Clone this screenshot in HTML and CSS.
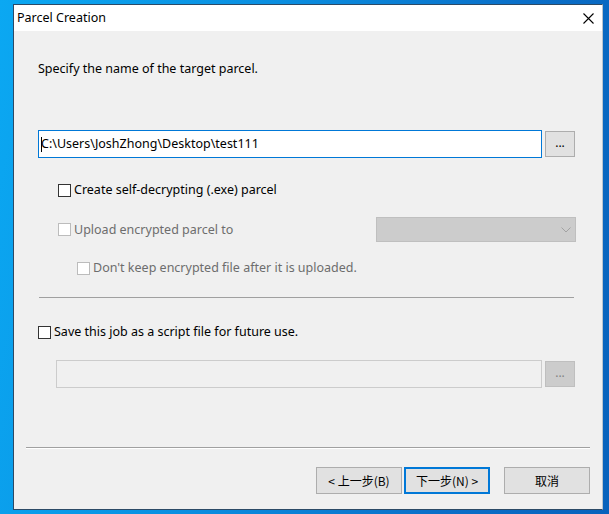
FILE: index.html
```html
<!DOCTYPE html>
<html>
<head>
<meta charset="utf-8">
<link rel="stylesheet" href="styles.css">
</head>
<body>
<div class="desktop">
  <div class="window">
    <div class="titlebar">
      <span class="title">Parcel Creation</span>
      <svg class="close" width="11" height="11" viewBox="0 0 11 11"><path d="M0.5 0.5 L10.5 10.5 M10.5 0.5 L0.5 10.5" stroke="#000" stroke-width="1.1" fill="none"/></svg>
    </div>
    <div class="client">
      <p class="prompt">Specify the name of the target parcel.</p>
      <div class="path-row">
        <div class="textbox focused"><span class="caret"></span>C:\Users\JoshZhong\Desktop\test111</div>
        <div class="browse">...</div>
      </div>
      <div class="check row-exe"><span class="box"></span>Create self-decrypting (.exe) parcel</div>
      <div class="upload-row">
        <div class="check disabled"><span class="box"></span>Upload encrypted parcel to</div>
        <div class="combo"><svg class="chev" width="10" height="6" viewBox="0 0 10 6"><path d="M0.5 0.5 L5 5 L9.5 0.5" stroke="#a2a2a2" stroke-width="1" fill="none"/></svg></div>
      </div>
      <div class="check disabled row-keep"><span class="box"></span>Don't keep encrypted file after it is uploaded.</div>
      <div class="sep sep-mid"></div>
      <div class="check row-save"><span class="box"></span>Save this job as a script file for future use.</div>
      <div class="path-row script-row">
        <div class="textbox disabled"></div>
        <div class="browse disabled">...</div>
      </div>
      <div class="sep sep-bottom"></div>
      <div class="buttons">
        <div class="btn">&lt; 上一步(B)</div>
        <div class="btn default">下一步(N) &gt;</div>
        <div class="btn cancel">取消</div>
      </div>
    </div>
  </div>
</div>
</body>
</html>
```

FILE: styles.css
```css
* { box-sizing: border-box; }
html, body { margin: 0; padding: 0; }
body {
  width: 609px;
  height: 514px;
  overflow: hidden;
  font-family: "Noto Sans", "Noto Sans CJK SC", sans-serif;
  font-size: 12.5px;
  color: #000;
}
.desktop {
  width: 609px;
  height: 514px;
  padding: 4px 0 0 13px;
  background: linear-gradient(100deg, #0ba8f2 0%, #0a8ee0 40%, #0a6fc8 75%, #0862bc 100%);
}
.window {
  width: 590px;
  height: 506px;
  border: 1px solid #2c4a66;
  border-right-color: #b9c4cf;
  background: #f0f0f0;
  display: flex;
  flex-direction: column;
}
.titlebar {
  height: 26px;
  background: #fff;
  display: flex;
  align-items: center;
  padding: 0 8px 0 3px;
  flex-shrink: 0;
}
.title {
  flex: 1;
  line-height: 16px;
}
.close { display: block; }
.client {
  flex: 1;
  display: flex;
  flex-direction: column;
}
.prompt {
  margin: 30px 0 0 24px;
  line-height: 16px;
}
.path-row {
  display: flex;
  align-items: center;
  gap: 3px;
  margin-top: 53px;
  padding-left: 24px;
  height: 28px;
}
.textbox {
  width: 504px;
  height: 28px;
  background: #fff;
  border: 1px solid #7a7a7a;
  display: flex;
  align-items: center;
  padding-left: 2px;
  line-height: 16px;
  white-space: nowrap;
}
.textbox.focused { border-color: #0078d7; }
.caret {
  display: inline-block;
  width: 1px;
  height: 15px;
  background: #000;
  margin-right: -1px;
}
.browse {
  width: 30px;
  height: 26px;
  background: #e1e1e1;
  border: 1px solid #adadad;
  display: flex;
  align-items: center;
  justify-content: center;
  line-height: 16px;
  padding-bottom: 2px;
  font-size: 12px;
}
.script-row {
  margin-top: 20px;
  padding-left: 42px;
}
.script-row .textbox {
  width: 486px;
  background: #f0f0f0;
  border-color: #cccccc;
}
.browse.disabled {
  background: #cccccc;
  border-color: #bfbfbf;
  color: #838383;
}
.check {
  display: flex;
  align-items: center;
  line-height: 16px;
  height: 16px;
  white-space: nowrap;
}
.box {
  width: 13px;
  height: 13px;
  border: 1px solid #333;
  background: #fff;
  margin-right: 3px;
  flex-shrink: 0;
}
.check.disabled { color: #6d6d6d; }
.check.disabled .box { border-color: #bcbcbc; }
.row-exe { margin: 24px 0 0 44px; }
.upload-row {
  display: flex;
  align-items: center;
  margin-top: 19px;
  padding-left: 44px;
  padding-right: 26px;
  height: 25px;
}
.upload-row .check { flex: 1; }
.combo {
  width: 200px;
  height: 25px;
  background: #cccccc;
  border: 1px solid #bfbfbf;
  display: flex;
  align-items: center;
  justify-content: flex-end;
  padding-right: 4px;
}
.chev { display: block; margin-top: 1px; }
.row-keep { margin: 18px 0 0 63px; }
.sep {
  height: 2px;
  border-top: 1px solid #a0a0a0;
  border-bottom: 1px solid #fff;
}
.sep-mid {
  margin: 21px 0 0 25px;
  width: 535px;
  border-bottom-color: #f0f0f0;
}
.row-save { margin: 25px 0 0 24px; }
.sep-bottom {
  margin: 59px 0 0 12px;
  width: 564px;
}
.buttons {
  display: flex;
  justify-content: flex-end;
  margin-top: 18px;
  padding-right: 12px;
  gap: 2px;
}
.btn {
  width: 86px;
  height: 27px;
  background: #e1e1e1;
  border: 1px solid #adadad;
  display: flex;
  align-items: center;
  justify-content: center;
  font-family: "Noto Sans CJK SC", "Noto Sans", sans-serif;
  font-size: 12px;
  line-height: 16px;
}
.btn.default { border: 2px solid #0078d7; }
.btn.cancel { margin-left: 12px; }
```
